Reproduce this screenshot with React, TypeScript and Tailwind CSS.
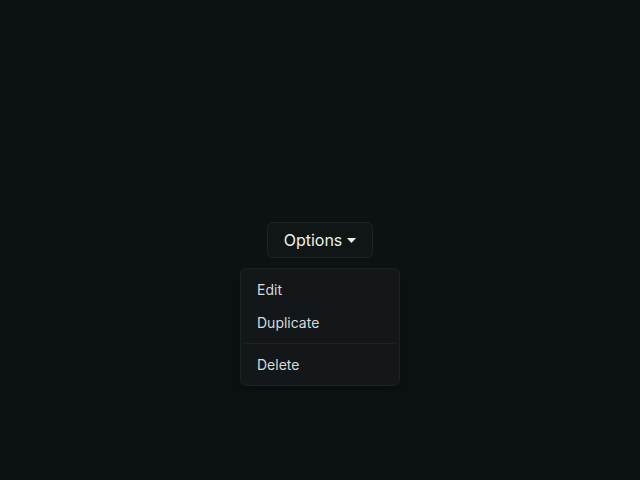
import { useState } from "react";

const items = [["Edit", "Duplicate"], ["Delete"]];

export default function App() {
  const [open, setOpen] = useState(true);

  return (
    <div
      className="h-[480px] w-[640px] bg-[#0b1211] flex flex-col items-center pt-[222px]"
      style={{ fontFamily: "Inter, 'Noto Sans', sans-serif" }}
    >
      <button
        onClick={() => setOpen(!open)}
        className="flex h-[36px] w-[106px] items-center justify-center gap-[5px] rounded-md border border-[#1d2423] bg-[#0f1615] text-[16px] text-[#eef0ef]"
      >
        Options
        <svg width="9" height="5" viewBox="0 0 9 5" className="mt-[1px]">
          <path d="M0 0h9L4.5 5z" fill="#eef0ef" />
        </svg>
      </button>

      {open && (
        <div className="mt-[10px] w-[160px] rounded-md border border-[#1c2123] bg-[#131719] p-1 shadow-lg">
          {items.map((group, gi) => (
            <div key={gi}>
              {gi > 0 && <div className="my-1 h-px bg-[#1d2224]" />}
              {group.map((label) => (
                <div
                  key={label}
                  className="flex h-[33px] items-center rounded px-3 text-[14px] text-[#d8dadb]"
                >
                  {label}
                </div>
              ))}
            </div>
          ))}
        </div>
      )}
    </div>
  );
}
